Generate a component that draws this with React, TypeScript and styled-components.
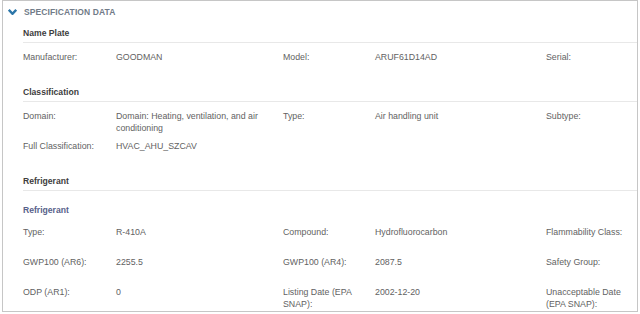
import { Fragment } from 'react';
import styled, { createGlobalStyle } from 'styled-components';

type Field = { label: string; value?: string };

const nameplate: Field[] = [
  { label: 'Manufacturer:', value: 'GOODMAN' },
  { label: 'Model:', value: 'ARUF61D14AD' },
  { label: 'Serial:' },
];

const classification: Field[][] = [
  [
    { label: 'Domain:', value: 'Domain: Heating, ventilation, and air conditioning' },
    { label: 'Type:', value: 'Air handling unit' },
    { label: 'Subtype:' },
  ],
  [{ label: 'Full Classification:', value: 'HVAC_AHU_SZCAV' }],
];

const refrigerant: Field[][] = [
  [
    { label: 'Type:', value: 'R-410A' },
    { label: 'Compound:', value: 'Hydrofluorocarbon' },
    { label: 'Flammability Class:' },
  ],
  [
    { label: 'GWP100 (AR6):', value: '2255.5' },
    { label: 'GWP100 (AR4):', value: '2087.5' },
    { label: 'Safety Group:' },
  ],
  [
    { label: 'ODP (AR1):', value: '0' },
    { label: 'Listing Date (EPA SNAP):', value: '2002-12-20' },
    { label: 'Unacceptable Date (EPA SNAP):' },
  ],
];

const GlobalStyle = createGlobalStyle`
  body {
    margin: 0;
    background: #fff;
    font-family: "Liberation Sans", Arial, sans-serif;
  }
`;

const Page = styled.div`
  padding: 0 2px;
`;

const Card = styled.div`
  box-sizing: border-box;
  height: 312px;
  border: 1px solid #c6c6c6;
  overflow: hidden;
`;

const Header = styled.div`
  display: flex;
  align-items: center;
  gap: 7px;
  height: 21px;
  padding-left: 5px;
`;

const HeaderTitle = styled.span`
  font-size: 8.5px;
  font-weight: bold;
  color: #717b88;
  text-transform: uppercase;
  letter-spacing: 0.1px;
`;

const Body = styled.div`
  padding-left: 20px;
`;

const SectionTitle = styled.div`
  padding: 5px 0 3px;
  font-size: 8.6px;
  font-weight: bold;
  line-height: 12px;
  color: #3d3d3d;
  border-bottom: 1px solid #e8e8e8;
`;

const SubTitle = styled.div`
  padding-top: 13px;
  margin-bottom: 10px;
  font-size: 8.6px;
  font-weight: bold;
  line-height: 12px;
  color: #57618a;
`;

const Rows = styled.div<{ $top: number }>`
  padding-top: ${p => p.$top}px;
`;

const Row = styled.div`
  display: grid;
  grid-template-columns: 93px 167px 92px 171px 93px;
  box-sizing: border-box;
  min-height: 30px;
  padding-bottom: 6px;
  font-size: 8.8px;
  line-height: 12px;
  color: #626262;
`;

const Label = styled.div`
  padding-right: 10px;
`;

const Value = styled.div`
  padding-right: 16px;
`;

const Chevron = () => (
  <svg width="9" height="6" viewBox="0 0 9 6">
    <path d="M0.8 0.8 L4.5 4.8 L8.2 0.8" fill="none" stroke="#2c76a9" strokeWidth="2.4" />
  </svg>
);

const FieldRow = ({ fields }: { fields: Field[] }) => (
  <Row>
    {fields.map(f => (
      <Fragment key={f.label}>
        <Label>{f.label}</Label>
        <Value>{f.value ?? ''}</Value>
      </Fragment>
    ))}
  </Row>
);

export default function App() {
  return (
    <Page>
      <GlobalStyle />
      <Card>
        <Header>
          <Chevron />
          <HeaderTitle>Specification Data</HeaderTitle>
        </Header>
        <Body>
          <SectionTitle>Name Plate</SectionTitle>
          <Rows $top={8}>
            <FieldRow fields={nameplate} />
          </Rows>

          <SectionTitle>Classification</SectionTitle>
          <Rows $top={8}>
            {classification.map((r, i) => <FieldRow key={i} fields={r} />)}
          </Rows>

          <SectionTitle>Refrigerant</SectionTitle>
          <SubTitle>Refrigerant</SubTitle>
          <Rows $top={0}>
            {refrigerant.map((r, i) => <FieldRow key={i} fields={r} />)}
          </Rows>
        </Body>
      </Card>
    </Page>
  );
}
